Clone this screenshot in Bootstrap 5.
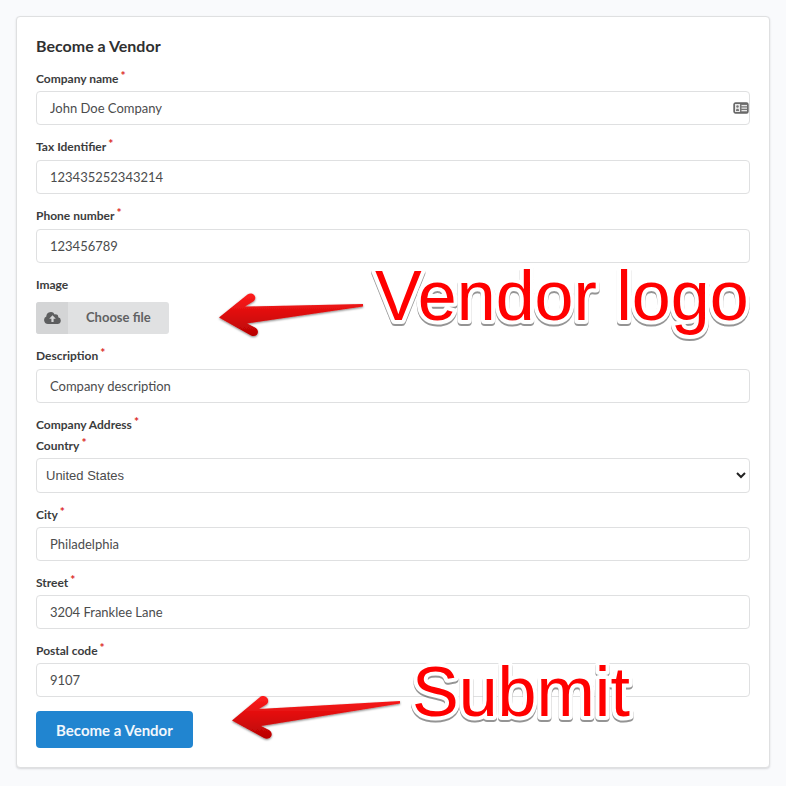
<!DOCTYPE html>
<html lang="en">
<head>
<meta charset="utf-8">
<meta name="viewport" content="width=device-width, initial-scale=1">
<title>Become a Vendor</title>
<link href="https://cdn.jsdelivr.net/npm/bootstrap@5.3.0/dist/css/bootstrap.min.css" rel="stylesheet">
<style>
body { background: #f9fafc; font-family: Lato, "Open Sans", sans-serif; color: #3b3c3d; }
.vendor-page { padding: 16px; }
.vendor-card { padding: 19px; border: 1px solid #dfe0e1; border-radius: 4px; box-shadow: 0 1px 2px rgba(34,36,38,.15); }
.vendor-title { font-size: 16px; line-height: 20px; font-weight: 700; margin: 0 0 14px; color: #2f3031; }
.vendor-title + .field .field-label { margin-bottom: 4px; }
.field { margin-bottom: 13px; }
.field-label { display: block; font-size: 12px; line-height: 17px; font-weight: 700; margin: 0 0 5px; color: #3b3c3d; }
.address-fields .field-label { margin-bottom: 4px; }
.image-label { margin-bottom: 9px; }
.required::after { content: "*"; color: #db2828; margin-left: 2px; position: relative; top: -3px; line-height: 1; }
.vendor-card .form-control, .vendor-card .form-select { height: 34px; padding: 0 13px; font-size: 13px; line-height: 20px; color: #4b4c4d; border: 1px solid #dfe0e1; border-radius: 4px; }
.vendor-card .form-select { height: 35px; font-family: "Liberation Sans", Arial, sans-serif; padding: 0 24px 0 9px; background-image: none; }
.contact-icon { right: 1px; top: 11px; width: 16px; height: 12px; }
.select-icon { right: 4px; top: 13px; width: 10px; height: 8px; pointer-events: none; }
.upload-btn { height: 32px; padding: 0; border: 0; border-radius: 3px; background: #e0e1e2; color: #606162; font-size: 13px; font-weight: 700; overflow: hidden; }
.upload-icon { width: 32px; height: 32px; background: #d4d5d6; }
.upload-text { padding: 0 18px; }
.submit-btn { height: 37px; padding: 0 20px; border: 0; border-radius: 4px; background: #2185d0; color: #f1f7fc; font-size: 15px; line-height: 20px; font-weight: 700; margin-top: 14px; }
.address-fields .field:last-child { margin-bottom: 0; }
.callout { pointer-events: none; overflow: visible; }
.callout text { font-family: "Liberation Sans", Arial, sans-serif; font-size: 70px; fill: #f00; stroke: #fff; stroke-width: 8px; stroke-linejoin: round; paint-order: stroke; }
.callout-image { left: 200px; top: 240px; }
.callout-submit { left: 210px; top: 636px; }
</style>
<script src="https://cdn.jsdelivr.net/npm/bootstrap@5.3.0/dist/js/bootstrap.bundle.min.js"></script>
</head>
<body>
<main class="vendor-page">
<form class="vendor-card bg-white position-relative">
  <h1 class="vendor-title">Become a Vendor</h1>
  <div class="field">
    <label class="field-label required" for="company">Company name</label>
    <div class="position-relative">
      <input class="form-control" id="company" type="text" value="John Doe Company">
      <svg class="contact-icon position-absolute" viewBox="0 0 16 12" aria-hidden="true"><rect x="1" y="1" width="14" height="10" rx="1.5" fill="#777" stroke="#666" stroke-width="1.4"/><path d="M2 2h5v8H2zM8.500 3h5.500v1.300H8.500zM8.500 5.500h5.500v1.300H8.500zM8.500 8h5.500v1.300H8.500z" fill="#e8e8e8"/><circle cx="4.500" cy="4.500" r="1.200" fill="#777"/><path d="M3 9V8q.3-1.300 1.500-1.300T6 8v1z" fill="#777"/></svg>
    </div>
  </div>
  <div class="field">
    <label class="field-label required" for="tax">Tax Identifier</label>
    <input class="form-control" id="tax" type="text" value="123435252343214">
  </div>
  <div class="field">
    <label class="field-label required" for="phone">Phone number</label>
    <input class="form-control" id="phone" type="text" value="123456789">
  </div>
  <div class="field">
    <label class="field-label image-label" for="image">Image</label>
    <button class="upload-btn btn d-flex align-items-center" id="image" type="button">
      <span class="upload-icon d-flex align-items-center justify-content-center"><svg width="17" height="12" viewBox="0 0 17 12" aria-hidden="true"><path fill="#5d5e5f" fill-rule="evenodd" d="M4 12A3.900 3.900 0 0 1 2.300 4.600A4.500 4.500 0 0 1 10.700 2.400A2.600 2.600 0 0 1 14.200 5.300A3.400 3.400 0 0 1 13.500 12ZM8.500 3.300L5.200 6.700H7.400V10H9.600V6.700H11.800Z"/></svg></span>
      <span class="upload-text">Choose file</span>
    </button>
  </div>
  <div class="field">
    <label class="field-label required" for="description">Description</label>
    <input class="form-control" id="description" type="text" value="Company description">
  </div>
  <fieldset class="address-fields">
    <legend class="field-label required">Company Address</legend>
    <div class="field">
      <label class="field-label required" for="country">Country</label>
      <div class="position-relative">
        <select class="form-select" id="country"><option>United States</option></select>
        <svg class="select-icon position-absolute" viewBox="0 0 10 8" aria-hidden="true"><path d="M1 2l4 4 4-4" fill="none" stroke="#222" stroke-width="2"/></svg>
      </div>
    </div>
    <div class="field">
      <label class="field-label required" for="city">City</label>
      <input class="form-control" id="city" type="text" value="Philadelphia">
    </div>
    <div class="field">
      <label class="field-label required" for="street">Street</label>
      <input class="form-control" id="street" type="text" value="3204 Franklee Lane">
    </div>
    <div class="field">
      <label class="field-label required" for="postal">Postal code</label>
      <input class="form-control" id="postal" type="text" value="9107">
    </div>
  </fieldset>
  <button class="submit-btn btn d-block" type="submit">Become a Vendor</button>

  <svg class="callout callout-image position-absolute" width="540" height="90" viewBox="217 257 540 90">
    <defs>
      <linearGradient id="arrowRed" x1="0" y1="0" x2="0" y2="1"><stop offset="0" stop-color="#ff1e1e"/><stop offset=".5" stop-color="#dc0c0c"/><stop offset="1" stop-color="#b80303"/></linearGradient>
      <filter id="arrowShade" x="-10%" y="-20%" width="120%" height="150%"><feDropShadow dx="0" dy="1" stdDeviation="1" flood-color="#000" flood-opacity=".5"/></filter>
      <filter id="textShade" x="-5%" y="-20%" width="110%" height="150%" color-interpolation-filters="sRGB"><feDropShadow dx="0" dy="2" stdDeviation="0.5" flood-color="#000" flood-opacity=".42"/></filter>
    </defs>
    <path fill="url(#arrowRed)" filter="url(#arrowShade)" d="M219 317.500L247.500 294.500C252 291 258 296.500 254 301L245 306.500L363 304V306.500L247 323.500L255 327.500C261 331 257 338 251 335.500Z"/>
    <text x="375" y="320" filter="url(#textShade)">Vendor logo</text>
  </svg>
  <svg class="callout callout-submit position-absolute" width="420" height="90" viewBox="227 653 420 90">
    <path fill="url(#arrowRed)" filter="url(#arrowShade)" d="M232 720.500L259.500 697.500C264 693.500 271 699 267 704L259 709L400 701V703.500L261 726L269 730C275 734 270 741 264 738Z"/>
    <text x="412" y="716" filter="url(#textShade)">Submit</text>
  </svg>
</form>
</main>
</body>
</html>
